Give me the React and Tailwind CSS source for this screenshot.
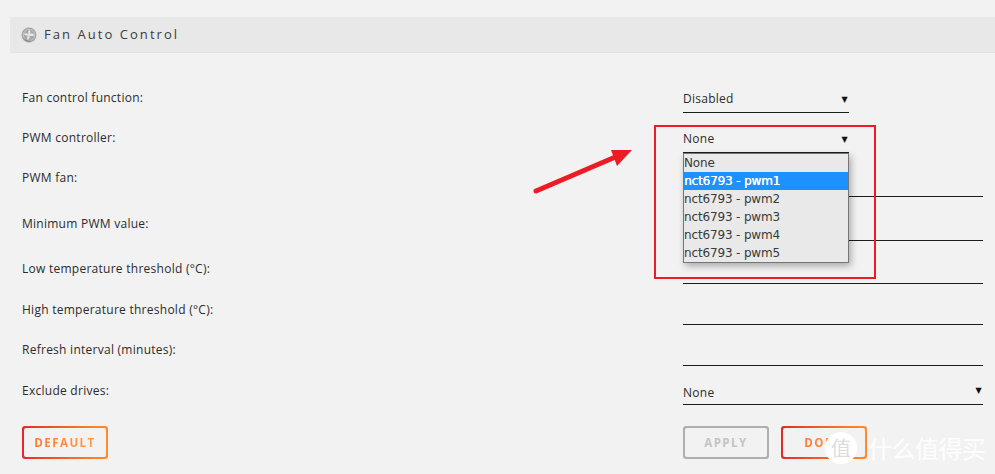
import React from 'react';

const rows = [
    { label: 'Fan control function:', value: 'Disabled', select: true, rowClass: 'h-[40px]', labelClass: 'pb-[7px]', widthClass: 'w-[166px]', valueClass: 'pb-[5px]', arrowClass: 'pb-[7px]' },
    { label: 'PWM controller:', value: 'None', select: true, rowClass: 'h-[40px]', labelClass: 'pb-[7px]', widthClass: 'w-[166px]', valueClass: 'pb-[5px]', arrowClass: 'pb-[7px]' },
    { label: 'PWM fan:', rowClass: 'h-[44px]', labelClass: 'pb-[11px]', widthClass: 'w-[300px]' },
    { label: 'Minimum PWM value:', rowClass: 'h-[44px]', labelClass: 'pb-[9px]', widthClass: 'w-[300px]' },
    { label: 'Low temperature threshold (°C):', rowClass: 'h-[43px]', labelClass: 'pb-[7px]', widthClass: 'w-[300px]' },
    { label: 'High temperature threshold (°C):', rowClass: 'h-[41px]', labelClass: 'pb-[7px]', widthClass: 'w-[300px]' },
    { label: 'Refresh interval (minutes):', rowClass: 'h-[41px]', labelClass: 'pb-[8px]', widthClass: 'w-[300px]' },
    { label: 'Exclude drives:', value: 'None', select: true, rowClass: 'h-[39px]', labelClass: 'pb-[6px]', widthClass: 'w-[300px]', valueClass: 'pb-[3px]', arrowClass: 'pb-[8px]' },
];

const options = ['None', 'nct6793 - pwm1', 'nct6793 - pwm2', 'nct6793 - pwm3', 'nct6793 - pwm4', 'nct6793 - pwm5'];

const FanIcon = () => (
    <svg width="16" height="16" viewBox="0 0 16 16">
        <circle cx="8" cy="8" r="7.5" fill="#a6a6a6" />
        <circle cx="8" cy="8" r="5.6" fill="none" stroke="#cfcfcf" strokeWidth="0.8" />
        <path d="M8 3C9.6 3.4 10 5.2 8.8 7C10.6 6.2 12.6 6.6 13.2 8.4C11.4 9.4 9.6 9.2 8.6 8.4C9 10.2 8.2 12.2 6.6 12.8C5.8 11.2 6.2 9.4 7.4 8.5C5.6 8.9 3.6 8.4 2.8 6.8C4.4 5.8 6.4 6 7.5 7.4C7 6 7 4.4 8 3Z" fill="#e6e6e6" />
        <path d="M3 11.5C4.5 13.5 7 14.5 9.5 14" fill="none" stroke="#7c7c7c" strokeWidth="1" />
    </svg>
);

const GradientButton = ({ label }) => (
    <div className="p-[2px] w-[86px] h-[33px] rounded-[3px] bg-gradient-to-r from-[#e22828] to-[#ff8c2f]">
        <div className="w-full h-full rounded-[2px] bg-[#f2f2f2] flex items-center justify-center">
            <span className="text-[11.5px] font-bold tracking-[1.5px] bg-gradient-to-r from-[#ff7a35] to-[#ff9a45] bg-clip-text text-transparent">{label}</span>
        </div>
    </div>
);

const App = () => {
    return (
        <div className="relative w-[995px] h-[474px] overflow-hidden bg-[#f2f2f2] text-[#2c2c2c] font-['Open_Sans',sans-serif] text-[12px] tracking-[0.26px]">
            <div className="pt-[17px] pl-[10px]">
                {/* Title bar */}
                <div className="h-[36px] bg-[#e8e8e8] border-b border-[#e3e3e3] flex items-center pl-[11px] gap-[7px]">
                    <FanIcon />
                    <span className="text-[13px] tracking-[2.05px] text-[#3c3c3c]">Fan Auto Control</span>
                </div>
            </div>

            {/* Form */}
            <div className="pt-[20px] pl-[22px]">
                {rows.map(r => (
                    <div key={r.label} className={`flex items-end ${r.rowClass}`}>
                        <div className={`w-[661px] leading-[16px] ${r.labelClass}`}>{r.label}</div>
                        <div className={`${r.widthClass} h-[30px] border-b border-[#1c1c1c] flex items-end justify-between pr-[1px]`}>
                            <span className={`leading-[16px] ${r.valueClass || ''}`}>{r.value}</span>
                            {r.select && <span className={`text-[8px] leading-[10px] text-[#111] font-['DejaVu_Sans',sans-serif] ${r.arrowClass}`}>▼</span>}
                        </div>
                    </div>
                ))}
                <div className="flex pt-[21px]">
                    <GradientButton label="DEFAULT" />
                    <div className="flex gap-[12px] ml-[575px]">
                        <div className="p-[2px] w-[86px] h-[33px] rounded-[3px] bg-[#aeaeae]">
                            <div className="w-full h-full rounded-[2px] bg-[#f2f2f2] flex items-center justify-center">
                                <span className="text-[11.5px] font-bold tracking-[1.5px] text-[#c4c4c4]">APPLY</span>
                            </div>
                        </div>
                        <GradientButton label="DONE" />
                    </div>
                </div>
            </div>

            {/* Open select list */}
            <div className="absolute left-[683px] top-[153px] w-[166px] h-[110px] border border-[#767676] bg-[#e9e9e9] shadow-[2px_3px_7px_rgba(0,0,0,0.3)] font-['DejaVu_Sans',sans-serif] text-[12px] tracking-[-0.15px] text-[#3a3a3a]">
                {options.map(o => (
                    <div key={o} className={`h-[18px] leading-[18px] ${o === 'nct6793 - pwm1' ? 'bg-[#1e90ff] text-white [text-shadow:0.4px_0_0_white]' : ''}`}>{o}</div>
                ))}
            </div>

            {/* Annotation */}
            <div className="absolute left-[654px] top-[125px] w-[222px] h-[154px] border-2 border-[#ed1c24]"></div>
            <svg className="absolute left-[530px] top-[146px]" width="106" height="50" viewBox="0 0 106 50">
                <path d="M6 45L90 9" stroke="#ed1c24" strokeWidth="5" strokeLinecap="round" />
                <path d="M102 4L81 4L87 20Z" fill="#ed1c24" />
            </svg>

            {/* Watermark */}
            <div className="absolute left-[825px] top-[432px] w-[32px] h-[32px] rounded-full bg-white flex items-center justify-center text-[20px] leading-none tracking-normal text-[#dcdcdc] font-['Noto_Sans_CJK_SC',sans-serif]">值</div>
            <div className="absolute left-[868px] top-[434px] text-[24px] leading-[28px] tracking-[-0.5px] text-white/85 font-['Noto_Sans_CJK_SC',sans-serif]">什么值得买</div>
        </div>
    );
};

export default App;
